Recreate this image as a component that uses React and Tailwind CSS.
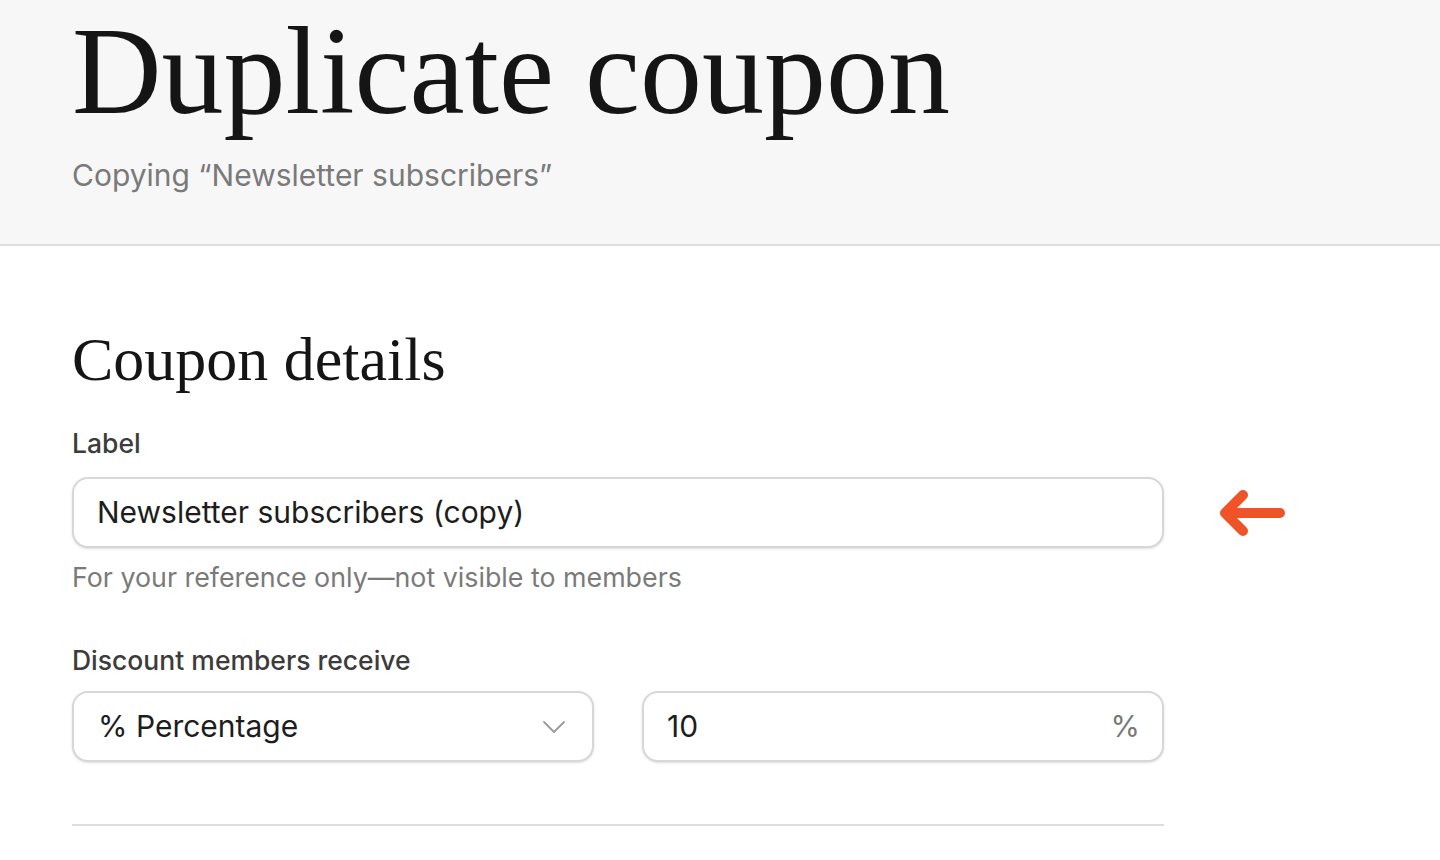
import React from 'react';

const sans = { fontFamily: 'Inter, "Noto Sans", sans-serif' };
const serif = { fontFamily: '"Liberation Serif", "DejaVu Serif", serif' };

const ArrowLeft = () => (
  <svg width="70" height="50" viewBox="0 0 70 50" fill="none">
    <path
      d="M62 25H7M25 7L7 25l18 18"
      stroke="#ee5428"
      strokeWidth="10"
      strokeLinecap="round"
      strokeLinejoin="round"
    />
  </svg>
);

const ChevronDown = () => (
  <svg width="24" height="14" viewBox="0 0 24 14" fill="none">
    <path d="M2 2l10 10L22 2" stroke="#9a9a9a" strokeWidth="1.8" strokeLinecap="round" strokeLinejoin="round" />
  </svg>
);

const App = () => {
  return (
    <div className="min-h-[860px] bg-white" style={sans}>
      {/* page header */}
      <header className="bg-[#f7f7f7] border-b-2 border-[#dedede] pl-[72px] pt-[10px] pb-[52px]">
        <h1 className="text-[124px] leading-none text-[#151515]" style={serif}>
          Duplicate coupon
        </h1>
        <p className="mt-[24px] text-[30px] leading-[34px] text-[#7a7a7a]">
          Copying “Newsletter subscribers”
        </p>
      </header>

      <main className="pl-[72px] pt-[82px]">
        <h2 className="text-[62px] leading-none text-[#151515]" style={serif}>
          Coupon details
        </h2>

        <label className="block mt-[38px] text-[26.5px] leading-[31px] font-medium text-[#3c3c3c]">
          Label
        </label>
        <div className="mt-[18px] flex items-center">
          <div className="w-[1092px] h-[71px] flex items-center px-[23px] rounded-[16px] border-2 border-[#d7d7d7] bg-white shadow-sm">
            <span className="text-[30px] text-[#1d1d1d]">Newsletter subscribers (copy)</span>
          </div>
          <div className="ml-[54px]">
            <ArrowLeft />
          </div>
        </div>
        <p className="mt-[14px] text-[26.8px] leading-[31px] text-[#7a7a7a]">
          For your reference only—not visible to members
        </p>

        <label className="block mt-[52px] text-[26.5px] leading-[31px] font-medium text-[#3c3c3c]">
          Discount members receive
        </label>
        <div className="mt-[15px] w-[1092px] grid grid-cols-2 gap-[48px]">
          <div className="h-[71px] flex items-center justify-between pl-[24px] pr-[26px] rounded-[16px] border-2 border-[#d7d7d7] bg-white shadow-sm">
            <span className="text-[30px] text-[#1d1d1d]">% Percentage</span>
            <ChevronDown />
          </div>
          <div className="h-[71px] flex items-center justify-between pl-[23px] pr-[22px] rounded-[16px] border-2 border-[#d7d7d7] bg-white shadow-sm">
            <span className="text-[30px] text-[#1d1d1d]">10</span>
            <span className="text-[30px] text-[#7a7a7a]">%</span>
          </div>
        </div>

        <div className="mt-[62px] w-[1092px] border-t-2 border-[#dedede]" />
      </main>
    </div>
  );
};

export default App;
